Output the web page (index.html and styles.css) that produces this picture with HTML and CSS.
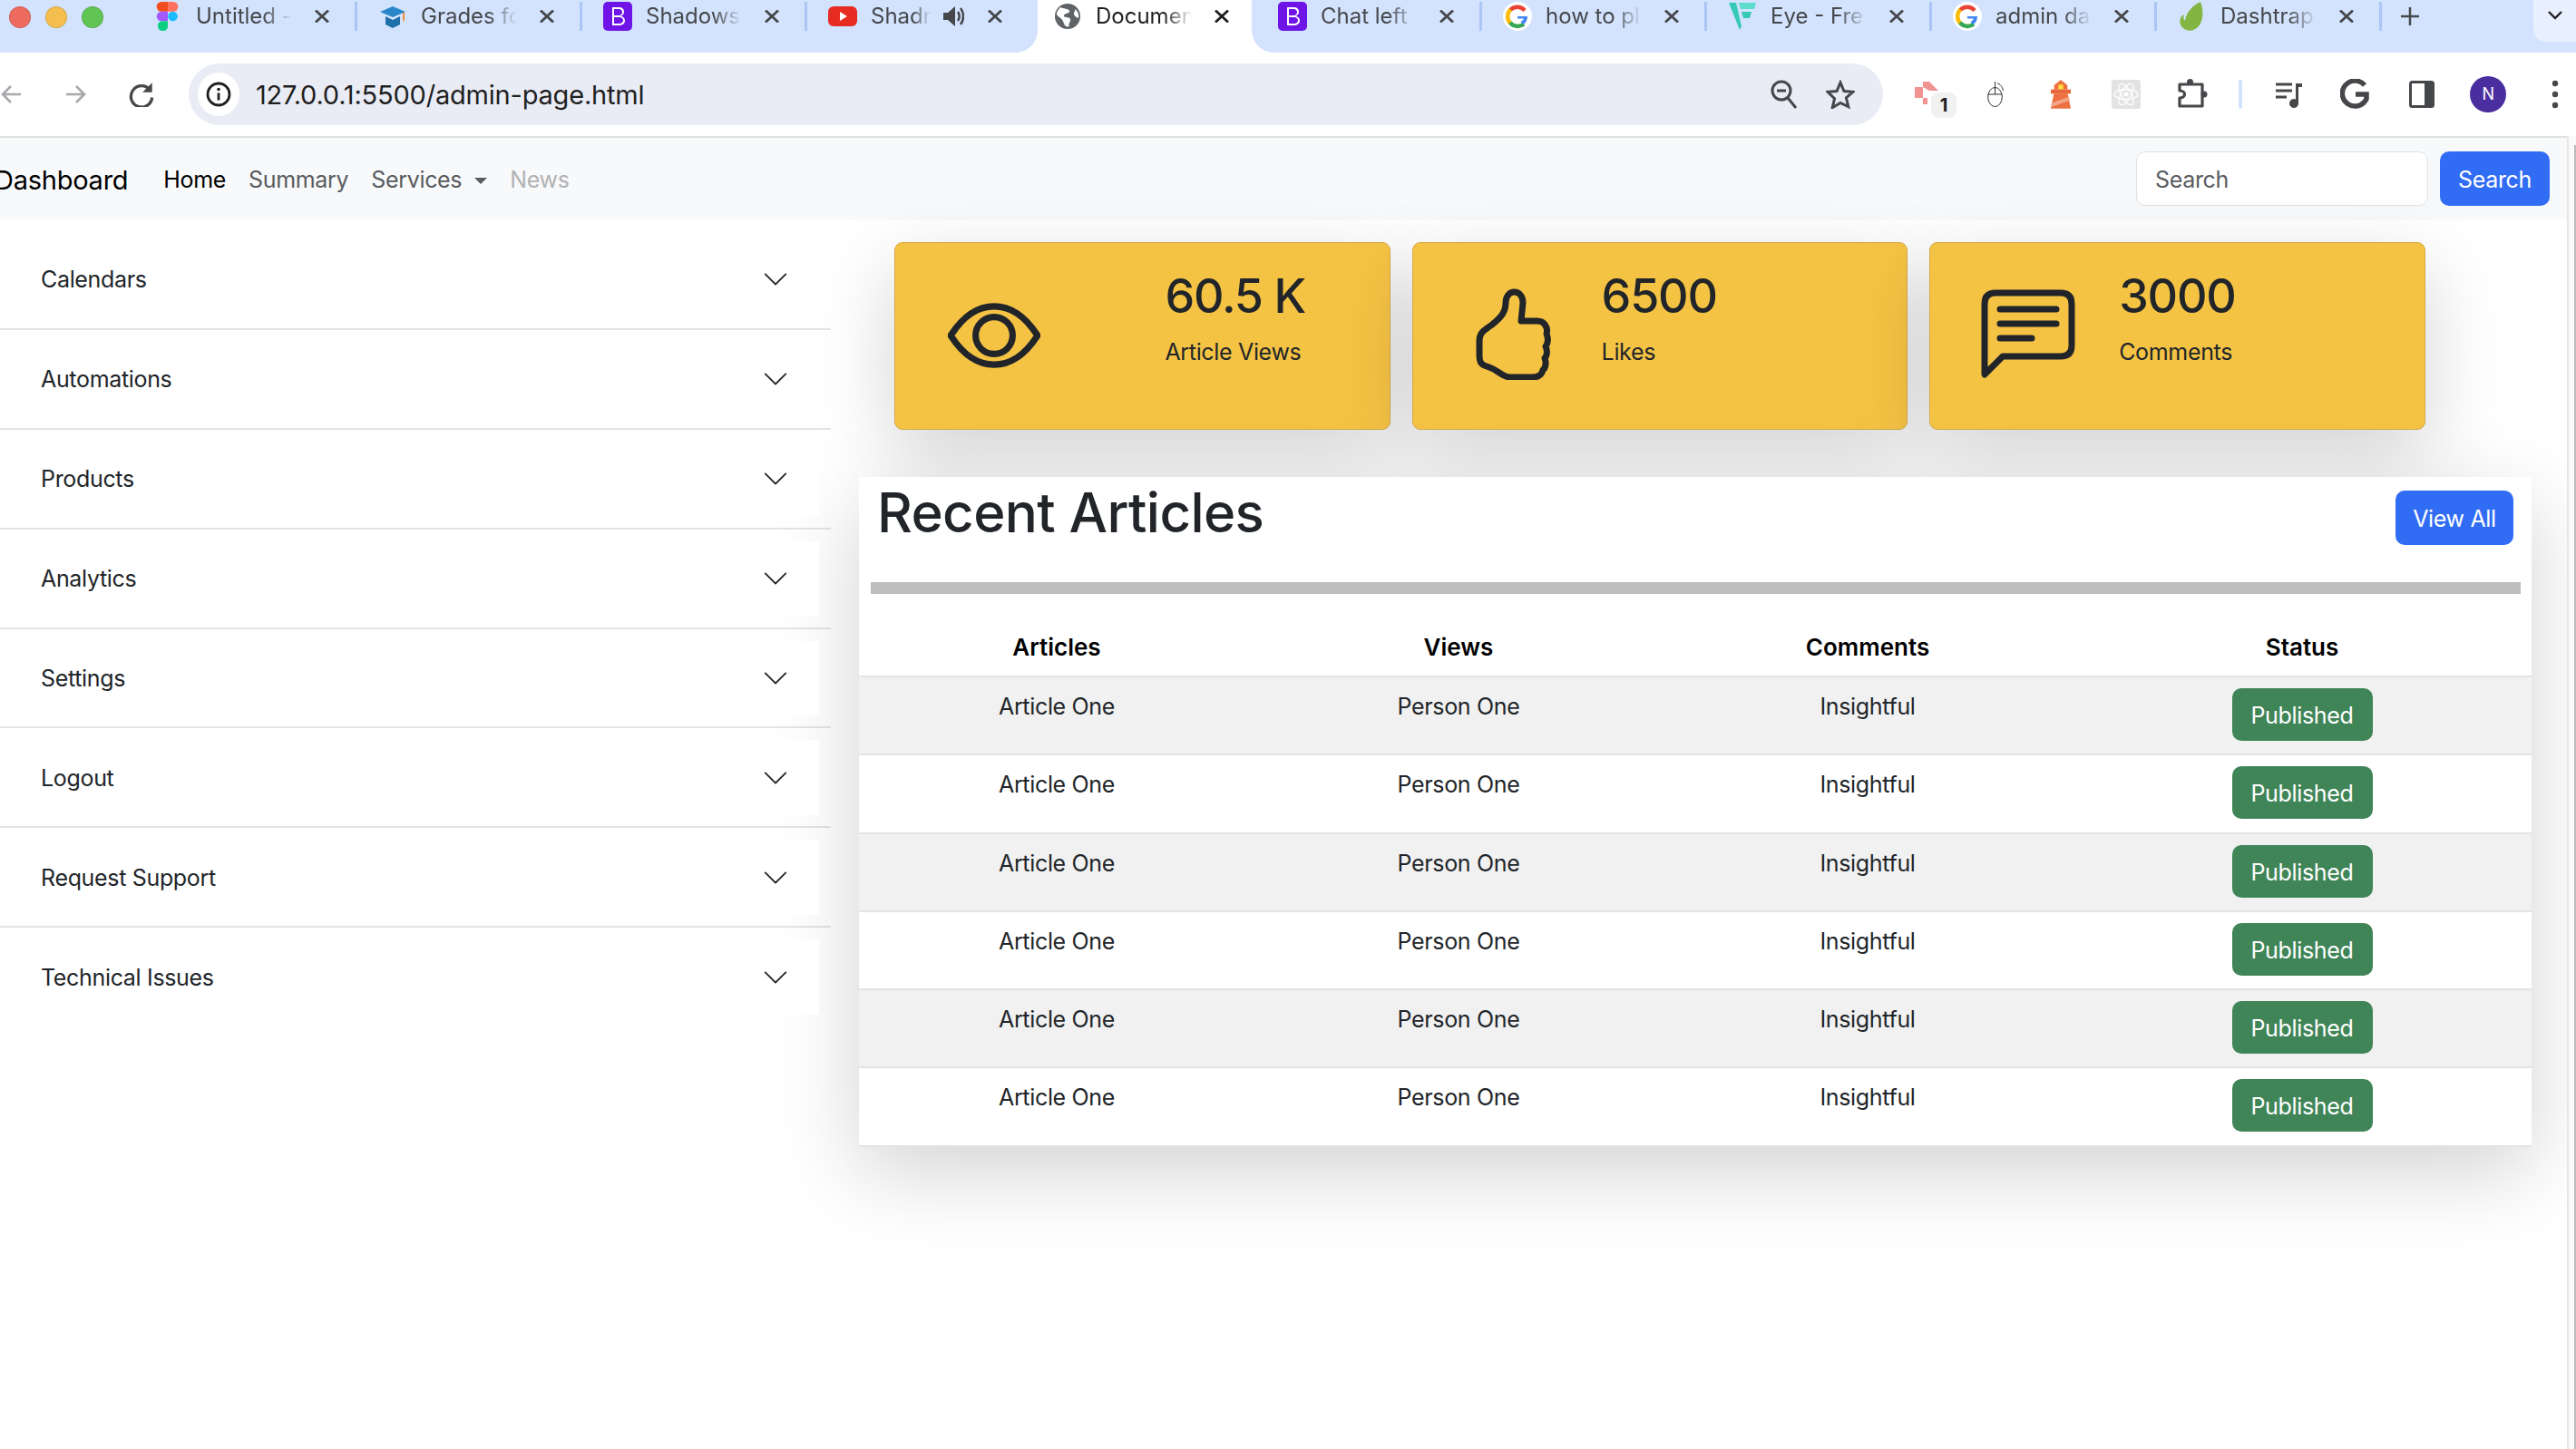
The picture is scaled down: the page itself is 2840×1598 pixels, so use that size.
FILE: index.html
```html
<!DOCTYPE html>
<html lang="en">
<head>
    <meta charset="UTF-8">
    <meta name="viewport" content="width=device-width, initial-scale=1.0">
    <title>Document</title>
    <link rel="stylesheet" href="styles.css">
</head>
<body>
    <svg class="icon-defs" aria-hidden="true">
        <symbol id="ic-close" viewBox="0 0 16 14"><path d="M1 .5l14 13M15 .5L1 13.500" fill="none" stroke="currentColor" stroke-width="2.800"/></symbol>
        <symbol id="ic-boot" viewBox="0 0 32 32"><rect width="32" height="32" rx="5" fill="#6f14e6"/><path d="M10 6h7c4 0 6 2 6 5 0 3-2 4-4 5 3 0 5 2 5 5 0 3-3 5-7 5h-7zM12 8v7h5c3 0 4-2 4-3.500S20 8 17 8zM12 17v7h5c4 0 5-2 5-3.500S21 17 17 17z" fill="#fff" fill-rule="evenodd"/></symbol>
        <symbol id="ic-google" viewBox="0 0 32 32"><circle cx="16" cy="16" r="16" fill="#fff"/><path d="M24 9.500A11 11 0 0 0 8 9" fill="none" stroke="#ea4335" stroke-width="4.500"/><path d="M8.300 8.500A11 11 0 0 0 8 23.500" fill="none" stroke="#fbbc05" stroke-width="4.500"/><path d="M7.800 23A11 11 0 0 0 23 24.500" fill="none" stroke="#34a853" stroke-width="4.500"/><path d="M16 16h11c0 4-1.500 7-4.500 9l-3-3c2-1 3-2.500 3.500-3.500h-7z" fill="#4285f4"/></symbol>
        <symbol id="ic-chevron" viewBox="0 0 16 16"><path d="M1.646 4.646a.5.5 0 0 1 .708 0L8 10.293l5.646-5.647a.5.5 0 0 1 .708.708l-6 6a.5.5 0 0 1-.708 0l-6-6a.5.5 0 0 1 0-.708z" fill="#212529"/></symbol>
    </svg>

    <div class="tabstrip">
        <div class="lights">
            <span class="light light-red"></span>
            <span class="light light-yellow"></span>
            <span class="light light-green"></span>
        </div>
        <div class="tab">
            <svg class="favicon" viewBox="0 0 32 32"><path d="M9 0h7v10.700H9A5.300 5.300 0 0 1 9 0z" fill="#f24e1e"/><path d="M16 0h6a5.300 5.300 0 0 1 0 10.700h-6z" fill="#ff7262"/><path d="M9 10.700h7v10.600H9a5.300 5.300 0 0 1 0-10.600z" fill="#a259ff"/><circle cx="21.500" cy="16" r="5.300" fill="#1abcfe"/><path d="M9 21.300h7V27a5.500 5.500 0 1 1-7-5.700z" fill="#0acf83"/></svg>
            <span class="tab-title">Untitled -</span>
            <svg class="tab-close"><use href="#ic-close"/></svg>
        </div>
        <div class="tab">
            <svg class="favicon" viewBox="0 0 32 32"><path d="M2 11L16 5l14 6-14 6z" fill="#2a86c8"/><path d="M8 16v9l8 4 8-4v-9l-8 4z" fill="#1f6fa8"/><path d="M27 12v8l2 2v-10z" fill="#f0913a"/></svg>
            <span class="tab-title">Grades fo</span>
            <svg class="tab-close"><use href="#ic-close"/></svg>
        </div>
        <div class="tab">
            <svg class="favicon"><use href="#ic-boot"/></svg>
            <span class="tab-title">Shadows</span>
            <svg class="tab-close"><use href="#ic-close"/></svg>
        </div>
        <div class="tab tab-nosep">
            <svg class="favicon" viewBox="0 0 32 32"><rect y="5" width="32" height="22" rx="6" fill="#e62b22"/><path d="M13 11l8 5-8 5z" fill="#fff"/></svg>
            <span class="tab-title tab-title-short">Shadr</span>
            <svg class="tab-speaker" viewBox="0 0 24 28"><path d="M1 10h5l8-7v22l-8-7H1z" fill="#45474a"/><path d="M17 9c2 3 2 7 0 10M20 5c4 5 4 13 0 18" fill="none" stroke="#45474a" stroke-width="2.500"/></svg>
            <svg class="tab-close"><use href="#ic-close"/></svg>
        </div>
        <div class="tab tab-nosep tab-active">
            <svg class="favicon" viewBox="0 0 32 32"><circle cx="16" cy="16" r="14" fill="#5f6368"/><path d="M8 6c3 2 9 1 10 4s-5 2-6 5 6 1 7 4-3 5-1 8c-3 1-5 0-6-3s-2-5-5-7-4-4-2-7zM24 8c3 2 5 6 4 10-2-1-5-2-5-5s2-2 1-5z" fill="#fff"/></svg>
            <span class="tab-title">Documen</span>
            <svg class="tab-close"><use href="#ic-close"/></svg>
        </div>
        <div class="tab">
            <svg class="favicon"><use href="#ic-boot"/></svg>
            <span class="tab-title">Chat left</span>
            <svg class="tab-close"><use href="#ic-close"/></svg>
        </div>
        <div class="tab">
            <svg class="favicon"><use href="#ic-google"/></svg>
            <span class="tab-title">how to pl</span>
            <svg class="tab-close"><use href="#ic-close"/></svg>
        </div>
        <div class="tab">
            <svg class="favicon" viewBox="0 0 32 32"><path d="M1 1h8l6 26-2 4z" fill="#35c9b4"/><path d="M12 1h19l-2 7H14z" fill="#5edccb"/><path d="M15 11h11l-2 7h-7z" fill="#35c9b4"/></svg>
            <span class="tab-title">Eye - Fre</span>
            <svg class="tab-close"><use href="#ic-close"/></svg>
        </div>
        <div class="tab">
            <svg class="favicon"><use href="#ic-google"/></svg>
            <span class="tab-title">admin da</span>
            <svg class="tab-close"><use href="#ic-close"/></svg>
        </div>
        <div class="tab">
            <svg class="favicon" viewBox="0 0 32 32"><path d="M25 0c4 10 3 22-3 28-5 5-14 5-18-1-3-5-2-11 3-13-1 3-1 5 1 7C9 12 16 4 25 0z" fill="#82b541"/></svg>
            <span class="tab-title">Dashtrap</span>
            <svg class="tab-close"><use href="#ic-close"/></svg>
        </div>
        <svg class="tab-new" viewBox="0 0 22 22"><path d="M11 1v20M1 11h20" fill="none" stroke="#45474a" stroke-width="2.500"/></svg>
        <div class="tab-list">
            <svg viewBox="0 0 16 10"><path d="M1 1l7 7 7-7" fill="none" stroke="#1f1f1f" stroke-width="2.400"/></svg>
        </div>
    </div>

    <div class="toolbar">
        <svg class="tool-nav" viewBox="0 0 24 24"><path d="M23 12H3M12 3l-9 9 9 9" fill="none" stroke="#a6a8ab" stroke-width="2.600"/></svg>
        <svg class="tool-nav" viewBox="0 0 24 24"><path d="M1 12h20M12 3l9 9-9 9" fill="none" stroke="#a6a8ab" stroke-width="2.600"/></svg>
        <svg class="tool-nav tool-reload" viewBox="0 0 24 24"><path d="M20 8a10 10 0 1 0 2 7" fill="none" stroke="#45474a" stroke-width="2.800"/><path d="M22 1v9h-9z" fill="#45474a"/></svg>
        <div class="omnibox">
            <span class="site-info">
                <svg viewBox="0 0 28 28"><circle cx="14" cy="14" r="12" fill="none" stroke="#1f1f1f" stroke-width="2.800"/><circle cx="14" cy="8.500" r="1.800" fill="#1f1f1f"/><path d="M14 12.500v8" stroke="#1f1f1f" stroke-width="2.800"/></svg>
            </span>
            <span class="url">127.0.0.1:5500/admin-page.html</span>
            <svg class="omni-zoom" viewBox="0 0 30 32"><circle cx="12" cy="12" r="10" fill="none" stroke="#45474a" stroke-width="3"/><path d="M7 12h10" stroke="#45474a" stroke-width="3"/><path d="M19 20l9 11" stroke="#45474a" stroke-width="3"/></svg>
            <svg class="omni-star" viewBox="0 0 32 32"><path d="M16 3l4 9.500 10 .8-7.600 6.500 2.400 9.900L16 25.400 7.200 30.700l2.400-9.900L2 13.300l10-.8z" fill="none" stroke="#45474a" stroke-width="3"/></svg>
        </div>
        <div class="extensions">
            <span class="ext">
                <svg class="ext-pin" viewBox="0 0 30 28"><path d="M0 7h9v12H0zM9 1h7l10 10H16l-7-4zM9 19h5v7H9z" fill="#f09391"/></svg>
                <b class="ext-badge">1</b>
            </span>
            <span class="ext">
                <svg class="ext-mouse" viewBox="0 0 19 28"><ellipse cx="8.500" cy="17" rx="7.800" ry="10.500" fill="none" stroke="#333" stroke-width="1"/><path d="M.7 14h15.600M8.500 0v14M11 2c3 .5 5.500 3 6.500 8" fill="none" stroke="#333" stroke-width="1"/></svg>
            </span>
            <span class="ext">
                <svg class="ext-house" viewBox="0 0 66 96"><path d="M33 0l22 18H11z" fill="#ec7040"/><rect x="11" y="18" width="44" height="14" fill="#ec7040"/><rect x="25" y="16" width="16" height="16" fill="#fde13c"/><rect y="32" width="66" height="14" fill="#e8663a"/><path d="M10 46h46l10 49H0z" fill="#ec7040"/><path d="M5 76l55-20 2 12L2 90z" fill="#f4a587"/></svg>
            </span>
            <span class="ext">
                <svg class="ext-react" viewBox="0 0 32 32"><rect width="32" height="32" rx="3" fill="#e3e3e3"/><g fill="none" stroke="#fff" stroke-width="1.300"><ellipse cx="16" cy="16" rx="13" ry="5.500"/><ellipse cx="16" cy="16" rx="13" ry="5.500" transform="rotate(60 16 16)"/><ellipse cx="16" cy="16" rx="13" ry="5.500" transform="rotate(120 16 16)"/></g><circle cx="16" cy="16" r="2.500" fill="#fff"/></svg>
            </span>
            <span class="ext">
                <svg class="ext-puzzle" viewBox="0 0 34 32"><path d="M3 6H28V30H3V21C7 21 8.500 18.500 8.500 17S7 13 3 13Z" fill="none" stroke="#45474a" stroke-width="3.200" stroke-linejoin="round"/><circle cx="14.500" cy="3.500" r="3.500" fill="#45474a"/><circle cx="30" cy="17" r="3.500" fill="#45474a"/></svg>
            </span>
            <span class="ext-sep"></span>
            <span class="ext ext-wide">
                <svg class="ext-music" viewBox="0 0 32 32"><path d="M2 5h18M2 12h18M2 19h12M2 26" stroke="#45474a" stroke-width="3"/><path d="M24 4h7v4h-4v18a5 5 0 1 1-3-4.500z" fill="#45474a"/></svg>
            </span>
            <span class="ext ext-wide">
                <svg class="ext-g" viewBox="0 0 32 34"><path d="M27 7A14 14 0 1 0 29 22V17H17" fill="none" stroke="#45474a" stroke-width="5.500"/></svg>
            </span>
            <span class="ext ext-wide">
                <svg class="ext-panel" viewBox="0 0 28 30"><rect x="1.500" y="1.500" width="25" height="27" rx="2" fill="none" stroke="#45474a" stroke-width="3"/><rect x="17" y="2" width="9" height="26" fill="#45474a"/></svg>
            </span>
            <span class="ext ext-wide"><span class="avatar">N</span></span>
            <span class="ext ext-wide">
                <svg class="ext-kebab" viewBox="0 0 8 32"><circle cx="4" cy="4" r="3.200" fill="#45474a"/><circle cx="4" cy="16" r="3.200" fill="#45474a"/><circle cx="4" cy="28" r="3.200" fill="#45474a"/></svg>
            </span>
        </div>
    </div>

    <nav class="navbar">
        <a class="brand">Dashboard</a>
        <a class="nav-link nav-home">Home</a>
        <a class="nav-link">Summary</a>
        <a class="nav-link nav-drop">Services</a>
        <a class="nav-link nav-off">News</a>
        <form class="nav-search">
            <input class="search-input" type="text" placeholder="Search">
            <button class="btn btn-blue btn-search" type="button">Search</button>
        </form>
    </nav>

    <div class="page">
        <aside class="sidebar">
            <div class="acc-item"><div class="acc-btn"><span>Calendars</span><svg class="chevron"><use href="#ic-chevron"/></svg></div></div>
            <div class="acc-item"><div class="acc-btn"><span>Automations</span><svg class="chevron"><use href="#ic-chevron"/></svg></div></div>
            <div class="acc-item"><div class="acc-btn"><span>Products</span><svg class="chevron"><use href="#ic-chevron"/></svg></div></div>
            <div class="acc-item"><div class="acc-btn"><span>Analytics</span><svg class="chevron"><use href="#ic-chevron"/></svg></div></div>
            <div class="acc-item"><div class="acc-btn"><span>Settings</span><svg class="chevron"><use href="#ic-chevron"/></svg></div></div>
            <div class="acc-item"><div class="acc-btn"><span>Logout</span><svg class="chevron"><use href="#ic-chevron"/></svg></div></div>
            <div class="acc-item"><div class="acc-btn"><span>Request Support</span><svg class="chevron"><use href="#ic-chevron"/></svg></div></div>
            <div class="acc-item"><div class="acc-btn"><span>Technical Issues</span><svg class="chevron"><use href="#ic-chevron"/></svg></div></div>
        </aside>

        <main class="main">
            <section class="stats">
                <div class="stat">
                    <div class="stat-icon stat-icon-wide">
                        <svg class="icon-eye" viewBox="0 0 100 70"><path d="M3 35C18 12 33 3.500 50 3.500S82 12 97 35C82 58 67 66.500 50 66.500S18 58 3 35z" fill="none" stroke="#212529" stroke-width="7"/><circle cx="50" cy="35" r="20" fill="none" stroke="#212529" stroke-width="7"/></svg>
                    </div>
                    <div class="stat-text"><h3>60.5 K</h3><p>Article Views</p></div>
                </div>
                <div class="stat">
                    <div class="stat-icon">
                        <svg class="icon-thumb" viewBox="0 0 84 101"><path d="M33 16C33 0 52 0 52 16L50 36H68C76 36 80 44 78 50 80 55 80 60 77 64 79 68 79 74 76 77 78 82 77 88 74 90 73 96 68 98 62 98H38C28 98 26 90 12 86 5 84 4 80 4 74V58C4 48 10 46 18 40 28 32 33 26 33 16Z" fill="none" stroke="#212529" stroke-width="7" stroke-linejoin="round"/></svg>
                    </div>
                    <div class="stat-text"><h3>6500</h3><p>Likes</p></div>
                </div>
                <div class="stat">
                    <div class="stat-icon">
                        <svg class="icon-chat" viewBox="0 0 105 98"><path d="M4 16Q4 4 16 4H88Q100 4 100 16V62Q100 74 88 74H24L4 94Z" fill="none" stroke="#212529" stroke-width="7" stroke-linejoin="round"/><path d="M21 22H83M21 38H83M21 54H56" stroke="#212529" stroke-width="7" stroke-linecap="round"/></svg>
                    </div>
                    <div class="stat-text"><h3>3000</h3><p>Comments</p></div>
                </div>
            </section>

            <section class="panel">
                <div class="panel-head">
                    <h2>Recent Articles</h2>
                    <button class="btn btn-blue btn-view" type="button">View All</button>
                </div>
                <hr class="rule">
                <table class="articles">
                    <colgroup>
                        <col class="col-a"><col class="col-b"><col class="col-c"><col class="col-d">
                    </colgroup>
                    <thead>
                        <tr><th>Articles</th><th>Views</th><th>Comments</th><th>Status</th></tr>
                    </thead>
                    <tbody>
                        <tr><td>Article One</td><td>Person One</td><td>Insightful</td><td><button class="btn btn-green" type="button">Published</button></td></tr>
                        <tr><td>Article One</td><td>Person One</td><td>Insightful</td><td><button class="btn btn-green" type="button">Published</button></td></tr>
                        <tr><td>Article One</td><td>Person One</td><td>Insightful</td><td><button class="btn btn-green" type="button">Published</button></td></tr>
                        <tr><td>Article One</td><td>Person One</td><td>Insightful</td><td><button class="btn btn-green" type="button">Published</button></td></tr>
                        <tr><td>Article One</td><td>Person One</td><td>Insightful</td><td><button class="btn btn-green" type="button">Published</button></td></tr>
                        <tr><td>Article One</td><td>Person One</td><td>Insightful</td><td><button class="btn btn-green" type="button">Published</button></td></tr>
                    </tbody>
                </table>
            </section>
        </main>
    </div>
    <div class="scrollbar"></div>
</body>
</html>
```

FILE: styles.css
```css
* {
    box-sizing: border-box;
}
html, body {
    margin: 0;
    height: 1598px;
    overflow: hidden;
    background: #fff;
}
body {
    font-family: Inter, "Liberation Sans", sans-serif;
    font-size: 25px;
    letter-spacing: -0.33px;
    color: #212529;
}
.icon-defs {
    width: 0;
    height: 0;
    display: block;
}

/* browser tabs */
.tabstrip {
    height: 58px;
    display: flex;
    align-items: flex-start;
    background: #d3e3fd;
    overflow: hidden;
    letter-spacing: 0;
}
.lights {
    width: 146px;
    display: flex;
    gap: 16px;
    padding: 7px 0 0 10px;
}
.light {
    width: 24px;
    height: 24px;
    border-radius: 50%;
    border: 1px solid rgba(0,0,0,0.12);
}
.light-red { background: #ed6a5e; }
.light-yellow { background: #f5bf4f; }
.light-green { background: #61c554; }
.tab {
    position: relative;
    width: 248px;
    height: 32px;
    margin-top: 2px;
    padding-left: 23px;
    display: flex;
    align-items: center;
    border-right: 3px solid #a9c6f5;
}
.tab-nosep {
    border-right-color: transparent;
}
.favicon {
    width: 32px;
    height: 32px;
    flex: none;
    z-index: 1;
}
.tab-title {
    width: 106px;
    margin-left: 15px;
    font-size: 24px;
    line-height: 30px;
    color: #45474a;
    white-space: nowrap;
    overflow: hidden;
    flex: none;
    -webkit-mask-image: linear-gradient(to right, #000 70%, transparent);
    mask-image: linear-gradient(to right, #000 70%, transparent);
}
.tab-title-short {
    width: 66px;
}
.tab-speaker {
    width: 24px;
    height: 28px;
    flex: none;
    margin-left: 13px;
}
.tab-close {
    width: 16px;
    height: 14px;
    flex: none;
    margin-left: 25px;
    color: #45474a;
}
.tab-title-short + .tab-speaker + .tab-close {
    margin-left: 26px;
}
.tab-active::before {
    content: "";
    position: absolute;
    left: -18px;
    right: -21px;
    top: -2px;
    height: 58px;
    background:
        radial-gradient(circle at 0 0, transparent 23.5px, #fff 24px) left bottom / 24px 24px no-repeat,
        radial-gradient(circle at 100% 0, transparent 23.5px, #fff 24px) right bottom / 24px 24px no-repeat,
        linear-gradient(#fff, #fff) center / calc(100% - 48px) 100% no-repeat;
}
.tab-active .tab-title {
    color: #1f1f1f;
    position: relative;
}
.tab-active .tab-close {
    color: #1f1f1f;
    position: relative;
}
.tab-new {
    width: 22px;
    height: 22px;
    flex: none;
    margin: 7px 0 0 20px;
}
.tab-list {
    width: 47px;
    height: 46px;
    margin-left: auto;
    background: #e8f0fd;
    border-bottom-left-radius: 14px;
    display: flex;
    align-items: center;
    justify-content: center;
    padding: 0 0 12px 0;
}
.tab-list svg {
    width: 16px;
    height: 10px;
}

/* toolbar */
.toolbar {
    height: 92px;
    display: flex;
    align-items: center;
    gap: 48px;
    background: #fff;
    letter-spacing: 0;
}
.tool-nav {
    width: 24px;
    height: 24px;
    flex: none;
}
.tool-reload {
    width: 28px;
    height: 28px;
    margin: 0 -2px;
}
.omnibox {
    width: 1868px;
    height: 68px;
    margin-left: -8px;
    padding-left: 10px;
    display: flex;
    align-items: center;
    background: #e9ecf5;
    border-radius: 34px;
    flex: none;
}
.site-info {
    width: 46px;
    height: 48px;
    border-radius: 50%;
    background: #fff;
    display: flex;
    align-items: center;
    justify-content: center;
    flex: none;
}
.site-info svg {
    width: 28px;
    height: 28px;
}
.url {
    margin-left: 18px;
    font-size: 29px;
    letter-spacing: -0.2px;
    color: #1f1f1f;
}
.omni-zoom {
    width: 30px;
    height: 32px;
    margin-left: auto;
}
.omni-star {
    width: 32px;
    height: 32px;
    margin: 0 31px 0 31px;
}
.extensions {
    display: flex;
    align-items: center;
    margin-left: -32px;
    flex: none;
}
.ext {
    position: relative;
    width: 72px;
    height: 60px;
    display: flex;
    align-items: center;
    justify-content: center;
}
.ext-wide {
    width: 73.5px;
}
.ext-pin {
    width: 30px;
    height: 28px;
    margin: -2px 4px 0 0;
}
.ext-badge {
    position: absolute;
    left: 37px;
    top: 28px;
    width: 28px;
    height: 28px;
    background: #f1f1f1;
    border-radius: 8px;
    font-size: 20px;
    font-weight: 700;
    line-height: 28px;
    text-align: center;
    color: #1f1f1f;
}
.ext-mouse { width: 19px; height: 28px; }
.ext-house { width: 22px; height: 32px; }
.ext-react { width: 32px; height: 32px; }
.ext-puzzle { width: 34px; height: 32px; margin: -2px 0 0 1px; }
.ext-music { width: 32px; height: 36px; }
.ext-g { width: 32px; height: 34px; }
.ext-panel { width: 28px; height: 30px; }
.ext-kebab { width: 8px; height: 32px; }
.ext-sep {
    width: 4px;
    height: 32px;
    margin: 0 14px 0 16px;
    border-radius: 2px;
    background: #d3e3fd;
}
.avatar {
    width: 40px;
    height: 40px;
    border-radius: 50%;
    background: #4a2ea0;
    color: #fff;
    font-size: 18px;
    line-height: 40px;
    text-align: center;
}

/* site navbar */
.navbar {
    height: 92px;
    display: flex;
    align-items: center;
    background: #f8f9fa;
    border-top: 2px solid #dfe2e1;
    white-space: nowrap;
}
.brand {
    margin: 2px 0 0 -6px;
    font-size: 29px;
    letter-spacing: -0.25px;
    color: #000;
}
.nav-link {
    margin: 2px 0 0 25px;
    color: #595c5f;
}
.nav-home {
    margin-left: 39px;
    color: #000;
}
.nav-drop::after {
    content: "";
    display: inline-block;
    margin-left: 14px;
    vertical-align: 4px;
    border-top: 7px solid #595c5f;
    border-left: 7px solid transparent;
    border-right: 7px solid transparent;
}
.nav-off {
    color: #b2b3b4;
}
.nav-search {
    margin-left: auto;
    margin-right: 29px;
    display: flex;
    gap: 13px;
}
.search-input {
    width: 322px;
    height: 60px;
    padding: 2px 20px 0;
    border: 1px solid #dee2e6;
    border-radius: 10px;
    background: #fff;
    font: inherit;
    letter-spacing: inherit;
}
.search-input::placeholder {
    color: #595c5f;
    opacity: 1;
}
.btn {
    border: none;
    border-radius: 10px;
    color: #fff;
    font: inherit;
    letter-spacing: inherit;
    padding: 2px 0 0;
}
.btn-blue {
    background: #316cf4;
}
.btn-search {
    width: 121px;
    height: 60px;
}

/* page */
.page {
    position: relative;
    display: flex;
    align-items: flex-start;
    height: 1356px;
}
.sidebar {
    width: 916px;
    margin-top: 12px;
    flex: none;
}
.acc-item {
    height: 109.9px;
    padding: 13px 13px 13px 0;
    border-bottom: 2px solid #e4e4e8;
}
.acc-item:last-child {
    border-bottom: none;
}
/* the button is white and sits above the cards' shadow, the row line does not */
.acc-btn {
    position: relative;
    z-index: 1;
    height: 82.9px;
    padding: 0 33px 0 45px;
    display: flex;
    align-items: center;
    justify-content: space-between;
    background: #fff;
}
.chevron {
    width: 30px;
    height: 30px;
}
.main {
    width: 1844px;
    margin-left: 31px;
    flex: none;
}
.stats {
    display: flex;
    gap: 24px;
    margin: 25px 0 52px 39px;
}
.stat {
    width: 546.6px;
    height: 207px;
    display: flex;
    background: #f5c344;
    border: 1px solid #d5a849;
    border-radius: 9px;
    box-shadow: 0 29px 87px rgba(0,0,0,0.175);
}
.stat-icon {
    width: 208px;
    padding: 0 0 5px 30px;
    display: flex;
    align-items: center;
    flex: none;
}
.stat-icon-wide {
    width: 297.4px;
    padding-left: 58px;
}
.icon-eye { width: 102px; height: 72px; margin-top: 3px; }
.icon-thumb { width: 84px; height: 101px; margin-left: 39px; }
.icon-chat { width: 105px; height: 98px; margin-left: 26px; }
.stat-text {
    padding-top: 25px;
}
.stat-text h3 {
    margin: 0;
    font-size: 52px;
    font-weight: 500;
    letter-spacing: -1.2px;
    line-height: 68px;
}
.stat-text p {
    margin: 7px 0 0;
    line-height: 40px;
}
.panel {
    position: relative;
    height: 737px;
    background: #fff;
    box-shadow: 0 29px 87px rgba(0,0,0,0.175);
}
.panel-head {
    height: 116px;
    padding: 15px 20px 0 20px;
    display: flex;
    justify-content: space-between;
    align-items: flex-start;
}
.panel-head h2 {
    margin: -11px 0 0;
    font-size: 60px;
    font-weight: 500;
    letter-spacing: -0.6px;
    line-height: 70px;
}
.btn-view {
    width: 130px;
    height: 60px;
}
.rule {
    height: 13px;
    margin: 0 12px 0 13px;
    border: none;
    background: #bdbdbd;
}
.articles {
    width: 100%;
    table-layout: fixed;
    border-collapse: collapse;
    text-align: center;
}
.col-a { width: 436px; }
.col-b { width: 450px; }
.col-c { width: 452px; }
.articles th {
    height: 91px;
    padding: 0 0 16px;
    vertical-align: bottom;
    font-size: 26px;
    font-weight: 600;
    letter-spacing: 0;
    color: #000;
    border-bottom: 2px solid #e3e3e5;
}
.articles td {
    height: 86.3px;
    padding: 12px 0;
    vertical-align: top;
    line-height: 40px;
    border-bottom: 2px solid #e3e3e5;
}
.articles tbody tr:nth-child(odd) {
    background: #f1f1f1;
}
.btn-green {
    display: block;
    width: 155px;
    height: 58px;
    margin: 0 auto;
    background: #408558;
}
.scrollbar {
    position: absolute;
    right: 0;
    top: 150px;
    bottom: 0;
    width: 10px;
    background: #fafafa;
    border-left: 2px solid #e6e6e6;
    z-index: 2;
}
.scrollbar::after {
    content: "";
    position: absolute;
    right: 0;
    top: 10px;
    bottom: 0;
    width: 2px;
    background: #bbb;
}
```
